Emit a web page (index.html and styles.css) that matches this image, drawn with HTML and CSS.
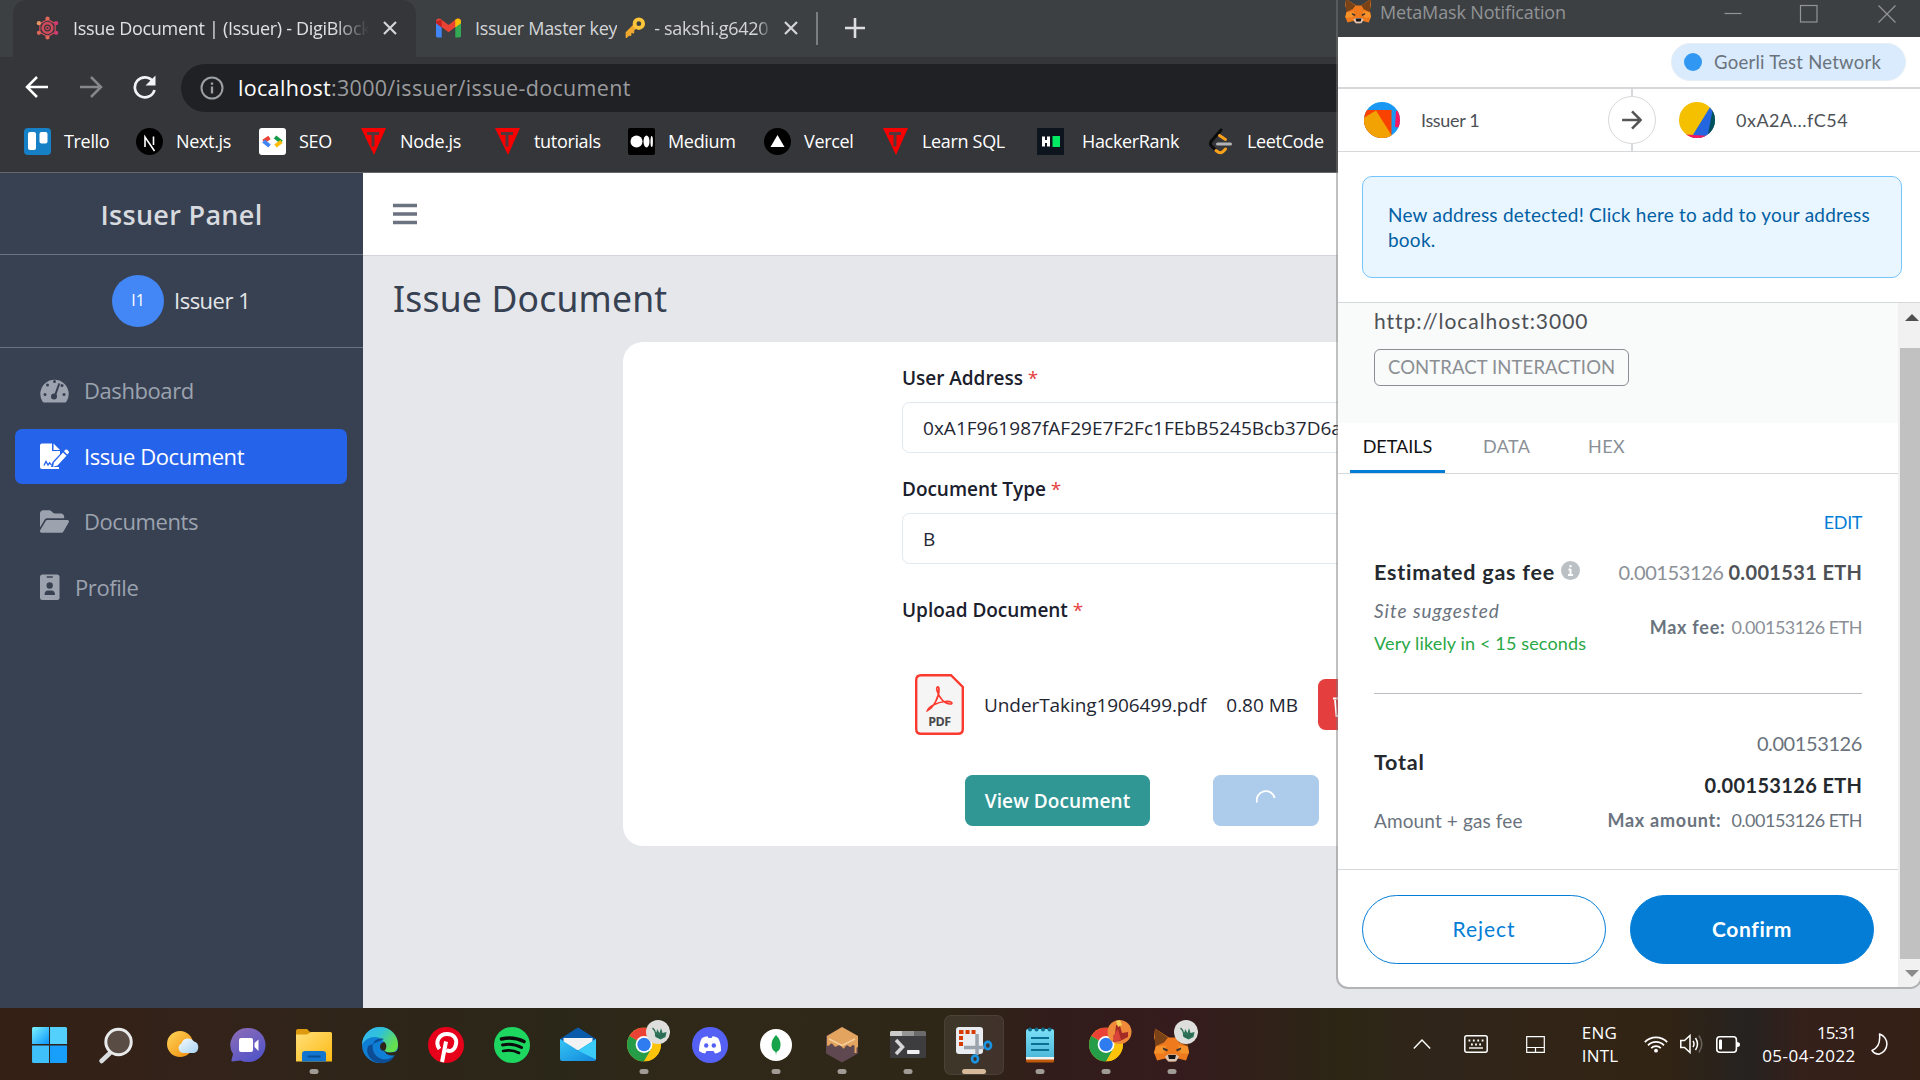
FILE: index.html
```html
<!DOCTYPE html>
<html lang="en">
<head>
<meta charset="utf-8">
<title>Issue Document | (Issuer) - DigiBlock</title>
<link rel="stylesheet" href="styles.css">
</head>
<body>

<svg class="defs" aria-hidden="true">
  <defs>
    <linearGradient id="win" x1="0" y1="0" x2="1" y2="1"><stop offset="0" stop-color="#7df3ff"/><stop offset="1" stop-color="#0a95f9"/></linearGradient>
    <linearGradient id="sun" x1="0" y1="0" x2="1" y2="1"><stop offset="0" stop-color="#ffd65a"/><stop offset="1" stop-color="#f08a0c"/></linearGradient>
    <linearGradient id="cloud" x1="0" y1="0" x2="1" y2="1"><stop offset="0" stop-color="#f4fbff"/><stop offset="1" stop-color="#a9d3f2"/></linearGradient>
    <linearGradient id="chat" x1="0" y1="0" x2="0.6" y2="1"><stop offset="0" stop-color="#8f6db5"/><stop offset="1" stop-color="#5455c8"/></linearGradient>
    <linearGradient id="folder" x1="0" y1="0" x2="1" y2="1"><stop offset="0" stop-color="#ffe07a"/><stop offset="1" stop-color="#fdb913"/></linearGradient>
    <linearGradient id="edge" x1="0" y1="0" x2="1" y2="0.5"><stop offset="0" stop-color="#35b5f5"/><stop offset="0.5" stop-color="#2fc2d8"/><stop offset="1" stop-color="#66e04c"/></linearGradient>
    <linearGradient id="mail" x1="0" y1="0" x2="1" y2="1"><stop offset="0" stop-color="#35c5f4"/><stop offset="1" stop-color="#1387dc"/></linearGradient>
    <linearGradient id="note" x1="0" y1="0" x2="0" y2="1"><stop offset="0" stop-color="#7be0f7"/><stop offset="1" stop-color="#4fb9da"/></linearGradient>
    <symbol id="close" viewBox="0 0 14 14"><path d="M1 1l12 12M13 1L1 13" fill="none" stroke="currentColor" stroke-width="2.2"/></symbol>
    <symbol id="tpoint" viewBox="0 0 27 27"><path d="M1 0h25L14 27z" fill="#f80000"/><path d="M7 5.500h12M13 5.500v13" stroke="#54373a" stroke-width="3" fill="none"/></symbol>
    <symbol id="chrome" viewBox="0 0 34 34">
      <circle cx="17" cy="17" r="17" fill="#fcc30b"/>
      <path d="M17 17L2.300 8.500A17 17 0 0 1 31.700 8.500L31.700 9z" fill="#ea4335"/>
      <path d="M17 17L2.300 8.500A17 17 0 0 0 17 34L24.500 21z" fill="#259c47"/>
      <path d="M17 9h14.900A17 17 0 0 1 17 34l7.500-13z" fill="#fcc30b"/>
      <circle cx="17" cy="17" r="8.400" fill="#fff"/><circle cx="17" cy="17" r="6.700" fill="#2f7cf0"/>
    </symbol>
    <symbol id="fox" viewBox="0 0 36 34">
      <path d="M1 0L15 9H22L34 0L35 9L33 16L35 24L32 32L24 30L20 33H15L11 30L3 32L0 24L2 16L0 9z" fill="#ee7a1d"/>
      <path d="M1 0L14 9L10 14L1 18z" fill="#7a4217"/><path d="M34 0L22 9L25 14L34 18z" fill="#7a4217"/>
      <path d="M2 18L12 17L10 25L0 25zM34 18L24 17L26 25L35 25z" fill="#f6922b"/>
      <path d="M9 19l5 2-1 2-4-2zM27 19l-5 2 1 2 4-2z" fill="#40352c"/>
      <path d="M11 28l3-2h8l3 2-3 5h-8z" fill="#d8c3b5"/><path d="M14 26.500h8l-1 4h-6z" fill="#161616"/>
    </symbol>
    <symbol id="frog" viewBox="0 0 24 24"><circle cx="12" cy="12" r="12" fill="#dedfdd"/><path d="M8 9.500l2.500 3 .5-3.500 2.500 4 1.500-5 1.500 5 4-1-1 5-5 2.500-5-2.500z" fill="#2e7258"/><path d="M9 15l4 2 5-3M6.500 8l2.500 3" stroke="#2a6650" stroke-width="1.200" fill="none"/></symbol>
  </defs>
</svg>

<header class="browser">
  <div class="tabstrip">
    <div class="tab tab-active">
      <svg class="favicon" viewBox="0 0 24 24" fill="none" stroke="#cf4a5c" stroke-width="1.300"><path d="M12 3l8 4.500v9L12 21l-8-4.500v-9z"/><circle cx="12" cy="12" r="5" stroke-width="2.800"/><circle cx="12" cy="12" r="1.800"/><g fill="#e0685a" stroke="none"><circle cx="12" cy="2.200" r="2.200"/><circle cx="12" cy="21.800" r="2.200"/><circle cx="3" cy="7" r="2.200" fill="#e89a62"/><circle cx="3" cy="17" r="2.200"/><circle cx="21" cy="7" r="2.200" fill="#d23b70"/><circle cx="21" cy="17" r="2.200" fill="#d23b70"/></g></svg>
      <span class="tab-title fade">Issue Document | (Issuer) - DigiBlock</span>
      <svg class="tab-close"><use href="#close"/></svg>
    </div>
    <div class="tab">
      <svg class="favicon" viewBox="0 0 24 24"><path d="M0 5v14.500A1.500 1.500 0 0 0 1.500 21H5.500V9z" fill="#4285f4"/><path d="M24 5v14.500a1.500 1.500 0 0 1-1.500 1.500H18.500V9z" fill="#34a853"/><path d="M0 5.500C0 3 2.800 2 4.600 3.400L12 9l7.400-5.600C21.200 2 24 3 24 5.500V7l-12 9L0 7z" fill="#ea4335"/><path d="M18.500 4.100l.9-.7C21.200 2 24 3 24 5.500V7.500L18.500 11.500z" fill="#fbbc04"/><path d="M0 5.500V7.500L5.500 11.500V4.100z" fill="#c5221f"/></svg>
      <span class="tab-title">Issuer Master key</span>
      <svg class="key" viewBox="0 0 22 22"><path d="M12.500 9.500L2 20v-3.500L10.500 8M4 18l2.500 1M7 15l2.500 1.500" fill="none" stroke="#f0a92c" stroke-width="2.600"/><circle cx="14.500" cy="7" r="4.500" fill="none" stroke="#fcc53a" stroke-width="4"/></svg>
      <span class="tab-title sender fade">- sakshi.g6420</span>
      <svg class="tab-close"><use href="#close"/></svg>
    </div>
    <span class="tab-divider"></span>
    <svg class="new-tab" viewBox="0 0 20 20"><path d="M10 0v20M0 10h20" stroke="#dcdee0" stroke-width="2.600"/></svg>
  </div>
  <div class="toolbar">
    <svg class="nav-icon" viewBox="0 0 24 24"><path d="M23 12H2.500M12 2L2 12l10 10" fill="none" stroke="#fff" stroke-width="2.500"/></svg>
    <svg class="nav-icon" viewBox="0 0 24 24"><path d="M1 12h20.500M12 2l10 10-10 10" fill="none" stroke="#85878a" stroke-width="2.500"/></svg>
    <svg class="nav-icon" viewBox="0 0 24 24"><path d="M20 6.500A10 10 0 1 0 21.500 15" fill="none" stroke="#f2f3f4" stroke-width="2.700"/><path d="M22.500 0.500v10h-10z" fill="#f2f3f4"/></svg>
    <div class="omnibox">
      <svg class="info" viewBox="0 0 24 24" fill="none" stroke="#9aa0a6"><circle cx="12" cy="12" r="10.500" stroke-width="2"/><path d="M12 10.500v7M12 6.500v2.300" stroke-width="2.300"/></svg>
      <span class="url"><b>localhost</b>:3000/issuer/issue-document</span>
    </div>
  </div>
  <nav class="bookmarks">
    <a class="bookmark"><svg viewBox="0 0 27 27"><rect width="27" height="27" rx="4" fill="#1680c6"/><rect x="4" y="4" width="8" height="18" rx="2" fill="#fff"/><rect x="15.500" y="4" width="8" height="11.500" rx="2" fill="#fff"/></svg><span>Trello</span></a>
    <a class="bookmark"><svg viewBox="0 0 27 27"><circle cx="13.500" cy="13.500" r="13.500"/><path d="M9 19V9l9.500 14M17.500 8.500v8.500" fill="none" stroke="#fff" stroke-width="1.600"/></svg><span>Next.js</span></a>
    <a class="bookmark"><svg viewBox="0 0 27 27"><rect width="27" height="27" rx="3" fill="#fff"/><path d="M10.500 9.500l-6 4" stroke="#ea4335" stroke-width="4"/><path d="M4.500 13l6 5" stroke="#4285f4" stroke-width="4"/><path d="M16 9l6.500 5" stroke="#159a4b" stroke-width="4"/><path d="M22.500 13.500l-6 4.500" stroke="#fbbc04" stroke-width="4"/></svg><span>SEO</span></a>
    <a class="bookmark"><svg><use href="#tpoint"/></svg><span>Node.js</span></a>
    <a class="bookmark"><svg><use href="#tpoint"/></svg><span>tutorials</span></a>
    <a class="bookmark"><svg viewBox="0 0 27 27"><rect width="27" height="27" rx="2"/><circle cx="8.500" cy="13.500" r="6" fill="#fff"/><ellipse cx="18.500" cy="13.500" rx="3" ry="6" fill="#fff"/><ellipse cx="23.700" cy="13.500" rx="1.200" ry="5.500" fill="#fff"/></svg><span>Medium</span></a>
    <a class="bookmark"><svg viewBox="0 0 27 27"><circle cx="13.500" cy="13.500" r="13.500"/><path d="M13.500 7l7 12h-14z" fill="#fff"/></svg><span>Vercel</span></a>
    <a class="bookmark"><svg><use href="#tpoint"/></svg><span>Learn SQL</span></a>
    <a class="bookmark wide-gap"><svg viewBox="0 0 27 27"><rect width="27" height="27" fill="#0e141e"/><path d="M6.500 8.500v10M11.500 8.500v10M6 13.500h6" stroke="#fff" stroke-width="3"/><rect x="15.500" y="8" width="7.500" height="11" fill="#00ea64"/></svg><span>HackerRank</span></a>
    <a class="bookmark"><svg viewBox="0 0 27 27" fill="none" stroke-linecap="round" stroke-width="3"><path d="M14 2L4.500 13c-1.500 2-1 4 0 5l4 4" stroke="#0b0b0b"/><path d="M12.500 7.500l6 4M9 22.500c4 3.500 6 3 9.500-1.500" stroke="#f9a11b"/><path d="M10.500 16h13" stroke="#b3b3b3"/></svg><span>LeetCode</span></a>
  </nav>
</header>

<main class="app">
  <aside class="sidebar">
    <div class="panel-title">Issuer Panel</div>
    <div class="profile"><span class="avatar">I1</span><span class="profile-name">Issuer 1</span></div>
    <nav class="menu">
      <a class="menu-item"><svg class="mi" viewBox="0 0 29 29"><path d="M2.500 25.500A14.200 14.200 0 1 1 26.500 25.500Q26 26.500 25 26.500H4Q3 26.500 2.500 25.500z" fill="currentColor"/><g fill="#384152"><circle cx="14.500" cy="5.500" r="1.500"/><circle cx="7.500" cy="9" r="1.500"/><circle cx="5" cy="18.500" r="1.500"/><circle cx="24" cy="18.500" r="1.500"/><circle cx="14" cy="20.500" r="3"/><path d="M18.500 7l1.700.7-4.500 13-2-.6z"/><circle cx="22" cy="9.500" r="1.500"/></g></svg><span>Dashboard</span></a>
      <a class="menu-item active"><svg class="mi" viewBox="0 0 29 29"><path d="M2 1.500h10v7.500h8v3l-7.500 8-1.500 5H19V27H2Q0 27 0 25V3.500Q0 1.500 2 1.500z" fill="currentColor"/><path d="M13.500 1.500l6.500 6.500h-6.500z" fill="currentColor"/><path d="M14 20.500L23 10.500l3.500 3.200L17.500 23.500l-4.500 1.200z" fill="currentColor"/><path d="M24 9.300l1.300-1.500q1-.8 2 0l1.300 1.400q.8 1 0 1.900L27.400 12.500z" fill="currentColor"/><path d="M4 23.500l2-4 2 3.500 1.500-2.200 2 2.200" fill="none" stroke="#2563eb" stroke-width="1.300"/></svg><span>Issue Document</span></a>
      <a class="menu-item"><svg class="mi" viewBox="0 0 576 512"><path fill="currentColor" d="M88.700 223.800L0 375.800V96C0 60.700 28.700 32 64 32H181.500c17 0 33.300 6.700 45.300 18.700l26.500 26.500c12 12 28.300 18.700 45.300 18.700H416c35.300 0 64 28.700 64 64v32H144c-22.800 0-43.800 12.100-55.300 31.800zm27.600 16.100C122.100 230 132.600 224 144 224H544c11.500 0 22 6.100 27.700 16.100s5.700 22.200-.1 32.100l-112 192C453.900 474 443.400 480 432 480H32c-11.500 0-22-6.100-27.700-16.100s-5.700-22.200 .1-32.100l112-192z"/></svg><span>Documents</span></a>
      <a class="menu-item"><svg class="mi narrow" viewBox="0 0 20 26"><rect width="19.500" height="25.500" rx="2.500" fill="currentColor"/><g fill="#384152"><rect x="6.500" y="1.800" width="6.500" height="1.500" rx=".7"/><circle cx="9.700" cy="11" r="3.200"/><path d="M4.500 20.500q0-4.500 3.500-4.500h3.500q3.500 0 3.500 4.500z"/></g></svg><span>Profile</span></a>
    </nav>
  </aside>
  <section class="content">
    <div class="topbar"><svg class="burger" viewBox="0 0 24 22"><path d="M0 2.500h24M0 11h24M0 19.500h24" stroke="#6b7280" stroke-width="3.500"/></svg></div>
    <h1 class="page-title">Issue Document</h1>
    <form class="card">
      <label>User Address <i>*</i></label>
      <div class="field">0xA1F961987fAF29E7F2Fc1FEbB5245Bcb37D6a</div>
      <label class="second">Document Type <i>*</i></label>
      <div class="field">B</div>
      <label class="third">Upload Document <i>*</i></label>
      <div class="file">
        <svg class="pdf" viewBox="0 0 49 61"><path d="M6 1.200H36L47.800 13V55q0 4.800-4.800 4.800H6Q1.200 59.800 1.200 55V6Q1.200 1.200 6 1.200z" fill="#f5f5f5" stroke="#fb3a2f" stroke-width="2.400"/><path d="M12.500 36.500c6-3 11.500-13 11.500-21 0-4-3-3-2 1 2 8 8 13.500 13 13.500 4 0 1.500-3.500-5-2.500-8 .8-16 5-17.500 9z" fill="none" stroke="#fb3a2f" stroke-width="1.700"/><text class="pdf-text" x="24.500" y="52">PDF</text></svg>
        <span class="filename">UnderTaking1906499.pdf</span><span class="size">0.80 MB</span>
        <span class="delete"><svg viewBox="0 0 20 22"><path d="M0 3.500h20M2 5l1.500 16h13L18 5M7 3V1h6v2M8 8v10M12 8v10" fill="none" stroke="#fff" stroke-width="1.800"/></svg></span>
      </div>
      <div class="actions">
        <span class="btn view">View Document</span>
        <span class="btn busy"><svg viewBox="0 0 20 20"><path d="M1 12.500A9 9 0 0 1 18.800 8" fill="none" stroke="#fff" stroke-width="1.800"/></svg></span>
      </div>
    </form>
  </section>
</main>

<footer class="taskbar">
  <div class="apps">
    <svg viewBox="0 0 66 72"><g fill="url(#win)"><path d="M15 20.500q0-1.500 1.500-1.500h15.500v17h-17z"/><path d="M33 19h15.500q1.500 0 1.500 1.500V36h-17z" fill="#53d0fb"/><path d="M15 37.500h17V55H16.500q-1.500 0-1.500-1.500z" fill="#3fc0fb"/><path d="M33 37.500h17v16q0 1.500-1.500 1.500H33z" fill="#189ffb"/></g></svg>
    <svg viewBox="0 0 66 72"><path d="M27 45l-8.500 8" stroke="#d9dcde" stroke-width="4.500" stroke-linecap="round"/><circle cx="35.500" cy="34" r="12.700" fill="#594c45" stroke="#e9eaec" stroke-width="3"/></svg>
    <svg viewBox="0 0 66 72"><circle cx="31" cy="36" r="13" fill="url(#sun)"/><path d="M34 45a5 5 0 0 1-1.500-9.500a7 7 0 0 1 12.500-2a6 6 0 0 1 0 11.500z" fill="url(#cloud)"/></svg>
    <svg viewBox="0 0 66 72"><path d="M33.500 20a17 17 0 0 1 0 34q-5 0-8-1.500L17 53.500q-1 0-.5-1.500l1.500-6A17 17 0 0 1 33.500 20z" fill="url(#chat)"/><rect x="24" y="30" width="14" height="14" rx="2" fill="#fff"/><path d="M39.500 35l4-3.500v11.500l-4-4z" fill="#fff"/></svg>
    <svg viewBox="0 0 66 72"><path d="M15 23q0-2 2-2h9l4 4v4H15z" fill="#dd9a0e"/><path d="M15 26.500h11l4-2.500h19.500q1.500 0 1.500 1.500V53.500H15z" fill="url(#folder)"/><path d="M21 53.500V46q0-3 3-3h18q3 0 3 3v7.500z" fill="#1175cf"/><path d="M26.500 48.500h13" stroke="#0a4f94" stroke-width="2"/><rect class="dot" x="28.500" y="61" width="9" height="5" rx="2.500"/></svg>
    <svg viewBox="0 0 66 72"><circle cx="33" cy="37" r="18" fill="#0f7fd6"/><path d="M15 37a18 18 0 0 1 36 0q0 8-9 7.500l-5-1.500q3-4 0-9c-5-8-18-6-22 3z" fill="url(#edge)"/><path d="M37 31c-8-2-13 4-11 11 2 8 12 13 21 6-1 4-7 8-14 7-10-1-15-10-12-17z" fill="#0d4d96"/><path d="M51 42q-3 3-9 2.500-4-.5-5-2.500 1 6 11 5.500z" fill="#2e2518"/><path d="M37.500 34q3.500 4 .5 8.500-5 1-5-4 0-4 4.500-4.500z" fill="#2e2518"/></svg>
    <svg viewBox="0 0 66 72"><circle cx="33" cy="37" r="18" fill="#e60019"/><path d="M26.500 41c-5-7-.5-15 7.500-15 7 0 10 5 9 10-1 6-6 8.500-9.500 6M33 33.500L29 54" fill="none" stroke="#fff" stroke-width="4"/></svg>
    <svg viewBox="0 0 66 72"><circle cx="33" cy="37" r="18" fill="#1ed760"/><g fill="none" stroke="#0c0c0c" stroke-linecap="round"><path d="M22.500 31q11.500-3 22.500 2.500" stroke-width="3.600"/><path d="M23.500 37q10-2.500 19 2.500" stroke-width="3"/><path d="M24 43q9-2 16 2" stroke-width="2.600"/></g></svg>
    <svg viewBox="0 0 66 72"><path d="M15 31l17-11q1-.7 2 0l17 11v4H15z" fill="#0a5cab"/><path d="M18.500 30H47.500V42h-29z" fill="#f3f3f3"/><path d="M15 31l18 11.500L51 31v20q0 2-2 2H17q-2 0-2-2z" fill="url(#mail)"/><path d="M33 42.500L51 31v20.500z" fill="#3acbf7"/></svg>
    <svg viewBox="0 0 66 72"><use href="#chrome" x="16" y="19.500" width="34" height="34"/><use href="#frog" x="35" y="12" width="24" height="24"/><rect class="dot" x="28.500" y="61" width="9" height="5" rx="2.500"/></svg>
    <svg viewBox="0 0 66 72"><circle cx="33" cy="37" r="18" fill="#5561f5"/><path d="M22 43c0-6 1-10 3-13q3-1.500 5.500-1.800l1 1.800h3l1-1.800Q38 28.500 41 30c2 3 3 7 3 13q-3 2-6 2.500l-1.500-2.500h-7L28 45.500Q25 45 22 43z" fill="#fff"/><circle cx="29.200" cy="37.500" r="2.200" fill="#5561f5"/><circle cx="36.800" cy="37.500" r="2.200" fill="#5561f5"/></svg>
    <svg viewBox="0 0 66 72"><circle cx="33" cy="37" r="16" fill="#fff"/><path d="M33 27q5 5 4.500 10.500Q37 42.500 33.500 44l-.5 3-.5-3q-4-2-4-7Q28.500 31.500 33 27z" fill="#16a34a"/><rect class="dot" x="28.500" y="61" width="9" height="5" rx="2.500"/></svg>
    <svg viewBox="0 0 66 72"><path d="M33 19l16 9v17.500L33 54.500l-16-9V28z" fill="#5f4850"/><path d="M33 19l16 9v11q-1 0-1.500 1v5h-2v-7q-1.500-2-3 0-1 2-3 0-2-2-3.500 1-1.500 3-3 0-2-3-5-1-2 2-4-1.500-2-2-3 0-1.500 2-3 1V28z" fill="#e2a45f"/><path d="M20 31l13 6.500L46 31" fill="none" stroke="#f6cf9c" stroke-width="1.500"/><rect class="dot" x="28.500" y="61" width="9" height="5" rx="2.500"/></svg>
    <svg viewBox="0 0 66 72"><rect x="15" y="23" width="36" height="27" rx="1.500" fill="#3d3d3f"/><path d="M15 28v-3.500q0-1.500 1.500-1.500H27v5z" fill="#ccc"/><path d="M27 23h12v5H27z" fill="#959595"/><path d="M39 23h10.500q1.500 0 1.500 1.500V28H39z" fill="#6b6b6b"/><path d="M21 32l6.500 7-6.500 7" fill="none" stroke="#d6d6d6" stroke-width="3.500"/><rect x="32" y="42" width="12.500" height="4" rx=".8" fill="#f0f0f0"/><rect class="dot" x="28.500" y="61" width="9" height="5" rx="2.500"/></svg>
    <svg viewBox="0 0 66 72"><rect x="3.500" y="7.500" width="59" height="59" rx="6" fill="#fff" fill-opacity=".08" stroke="#fff" stroke-opacity=".1"/><rect x="15" y="19" width="27" height="27" rx="3" fill="#e9edf2"/><g fill="#d83b01"><path d="M18 22h4.500v4H18zM24.500 22h4v4h-4zM30.500 22h4v4h-4zM18 28h4v4h-4zM18 34h4v4h-4z"/></g><path d="M23 39.500h20M36 26v21" stroke="#9aa2ab" stroke-width="3.500"/><g fill="none" stroke="#1b93e0" stroke-width="2.600"><ellipse cx="46.800" cy="37.500" rx="3.200" ry="3.600"/><ellipse cx="34" cy="51" rx="3" ry="3.400"/></g><rect x="21" y="61" width="24" height="5" rx="2.500" fill="#d5b99a"/></svg>
    <svg viewBox="0 0 66 72"><path d="M19 51h28v2q0 1.500-1.500 1.500h-25Q19 54.500 19 53z" fill="#c0580a"/><rect x="19" y="47" width="28" height="4.500" fill="#f3f3f3"/><path d="M19 23q0-2 2-2h24q2 0 2 2v26H19z" fill="url(#note)"/><path d="M24 30h18M24 36h18M24 42h18" stroke="#0a6f94" stroke-width="2"/><g fill="#0f6e8e"><circle cx="23" cy="21.500" r="2"/><circle cx="29.500" cy="21.500" r="2"/><circle cx="36" cy="21.500" r="2"/><circle cx="42.500" cy="21.500" r="2"/></g><rect class="dot" x="28.500" y="61" width="9" height="5" rx="2.500"/></svg>
    <svg viewBox="0 0 66 72"><use href="#chrome" x="16" y="19.500" width="34" height="34"/><circle cx="46.500" cy="24" r="12" fill="#ee8a3a"/><path d="M43 17l4 1 2 7 6-1v5l-8 4-7 1 2-8z" fill="#a32a25"/><path d="M43 13l4-1 2 5-4 2z" fill="#f2cf55"/><path d="M40 28l5-7 3 11-7 2z" fill="#d8433a"/><rect class="dot" x="28.500" y="61" width="9" height="5" rx="2.500"/></svg>
    <svg viewBox="0 0 66 72"><use href="#fox" x="15" y="20.500" width="36" height="34"/><use href="#frog" x="35" y="12" width="24" height="24"/><rect class="dot" x="28.500" y="61" width="9" height="5" rx="2.500"/></svg>
  </div>
  <div class="tray">
    <svg class="t-chev" viewBox="0 0 18 10"><path d="M.8 9.500L9 1l8.200 8.500" fill="none" stroke="#fff" stroke-width="1.400"/></svg>
    <svg class="t-kbd" viewBox="0 0 24 18"><rect x=".8" y=".8" width="22.400" height="16.400" rx="2" fill="none" stroke="#fff" stroke-width="1.500"/><path d="M4.500 5.500h15" stroke="#fff" stroke-width="1.800" stroke-dasharray="1.800 2.600"/><path d="M7 9.500h11" stroke="#fff" stroke-width="1.800" stroke-dasharray="1.800 2.300"/><path d="M5 13h14" stroke="#fff" stroke-width="1.400"/></svg>
    <svg class="t-pad" viewBox="0 0 19 17"><path d="M.7.700h17.600v15.600H.7zM.7 11.500h17.600M9.500 11.500v5" fill="none" stroke="#fff" stroke-width="1.200"/></svg>
    <div class="lang"><span>ENG</span><span>INTL</span></div>
    <svg class="t-wifi" viewBox="0 0 24 18"><g fill="none" stroke="#fff" stroke-width="1.700"><path d="M.8 7.200a15.500 15.500 0 0 1 22.400 0M4 10.300a11.200 11.200 0 0 1 16 0M7.200 13.200a6.800 6.800 0 0 1 9.600 0"/></g><circle cx="12" cy="15.700" r="1.900" fill="#fff"/></svg>
    <svg class="t-vol" viewBox="0 0 24 20"><g fill="none" stroke="#fff" stroke-width="1.500"><path d="M.8 6.500H4.500L10 1.500v17L4.500 13.500H.8zM13 7q2 3 0 6M15.500 4q4 6 0 12"/><path d="M18.800 1.500q6 8.500 0 17" opacity=".3"/></g></svg>
    <svg class="t-bat" viewBox="0 0 24 17"><rect x=".8" y=".8" width="19.600" height="15.400" rx="3" fill="none" stroke="#fff" stroke-width="1.600"/><rect x="3" y="3.500" width="3" height="10" rx="1" fill="#fff"/><path d="M21 6q3 0 3 2.500T21 11z" fill="#fff"/></svg>
    <div class="clock"><span class="time">15:31</span><span>05-04-2022</span></div>
    <svg class="t-moon" viewBox="0 0 20 22"><path d="M8.500 1A10.500 10.500 0 0 1 8 21.200Q3.500 21 1 17.500 10 14 8.500 1z" fill="none" stroke="#fff" stroke-width="1.500" stroke-linejoin="round"/></svg>
  </div>
</footer>

<section class="wallet">
  <div class="w-title">
    <svg class="w-fox"><use href="#fox"/></svg>
    <span>MetaMask Notification</span>
    <svg class="w-ctl" viewBox="0 0 176 20" fill="none" stroke="#929496" stroke-width="1.200"><path d="M.5 9.500h17"/><rect x="76.500" y="1.500" width="16.500" height="16.500"/><path d="M154.500 1.500l17 17M171.500 1.500l-17 17"/></svg>
  </div>
  <div class="w-net"><div class="pill"><span class="pill-dot"></span><span>Goerli Test Network</span></div></div>
  <div class="w-parties">
    <div class="party from">
      <svg class="ident" viewBox="0 0 36 36"><clipPath id="c"><circle cx="18" cy="18" r="18"/></clipPath><g clip-path="url(#c)"><path d="M0 0h36v36H0z" fill="#1898f3"/><path d="M0 8h27.500v28H0z" fill="#fa4200"/><path d="M-2 17L12 8.500 28 34v6H0z" fill="#f2a202"/><path d="M32 9l5-1v18l-6-1z" fill="#fb1860"/></g></svg>
      <span>Issuer 1</span>
    </div>
    <div class="arrow"><svg viewBox="0 0 22 22"><path d="M0 11h20M11 1.500L20.500 11 11 20.500" fill="none" stroke="#555" stroke-width="2.800"/></svg></div>
    <div class="party to">
      <svg class="ident" viewBox="0 0 36 36"><g clip-path="url(#c)"><path d="M0 0h36v36H0z" fill="#f5c000"/><path d="M33 2L12 36h24V2z" fill="#2465e0"/><path d="M34 6l-5 26h9V6z" fill="#01515d"/><path d="M6 32.500l26 1.500v3H6z" fill="#fb1860"/></g></svg>
      <span>0xA2A...fC54</span>
    </div>
  </div>
  <div class="w-alert"><p>New address detected! Click here to add to your address<br>book.</p></div>
  <div class="w-body">
    <div class="w-main">
      <div class="w-origin"><div class="origin">http://localhost:3000</div><div class="badge">CONTRACT INTERACTION</div></div>
      <div class="tabs"><span class="on">DETAILS</span><span class="data">DATA</span><span class="hex">HEX</span></div>
      <div class="details">
        <div class="edit">EDIT</div>
        <div class="row gas">
          <div class="gas-name"><b class="big">Estimated gas fee</b><svg class="i" viewBox="0 0 19 19"><circle cx="9.500" cy="9.500" r="9.500" fill="#bbc0c5"/><path d="M9.500 8v6.500M7.500 8.500h2M7 14h5M9.500 4v2.300" stroke="#fff" stroke-width="2"/></svg></div>
          <div><span class="num gray">0.00153126</span> <b class="sum dark">0.001531 ETH</b></div>
        </div>
        <div class="row estimate">
          <div><p class="site">Site suggested</p><p class="likely">Very likely in &lt; 15 seconds</p></div>
          <div class="max"><b>Max fee:</b><span class="small gray">0.00153126 ETH</span></div>
        </div>
        <hr>
        <div class="row total"><b class="big">Total</b><div class="total-values"><span class="num slate">0.00153126</span><b class="sum">0.00153126 ETH</b></div></div>
        <div class="row amount"><span>Amount + gas fee</span><div class="max"><b>Max amount:</b><span class="small wide">0.00153126 ETH</span></div></div>
      </div>
      <div class="w-actions"><span class="round reject">Reject</span><span class="round confirm">Confirm</span></div>
    </div>
    <div class="scroll"><span class="up"></span><span class="thumb"></span><span class="down"></span></div>
  </div>
</section>
</body>
</html>
```
FILE: styles.css
```css
* { box-sizing: border-box; }
body { margin: 0; width: 1920px; height: 1080px; overflow: hidden; position: relative; display: flex; flex-direction: column; font-family: "Open Sans", "Noto Sans", sans-serif; white-space: nowrap; }
svg { display: block; flex: none; }
p, h1, hr { margin: 0; }
.defs { position: absolute; width: 0; height: 0; }

/* Browser frame */
.browser { height: 173px; background: #35363a; border-bottom: 1px solid #66676a; color: #fff; }
.tabstrip { height: 57px; background: #3c4043; display: flex; padding-left: 13px; }
.tab { width: 403px; display: flex; align-items: center; padding: 0 20px 2px 20px; font-size: 18px; letter-spacing: -.3px; color: #d3d5d8; }
.tab-active { background: #35363a; border-radius: 14px 14px 0 0; padding-left: 23px; }
.favicon { width: 25px; height: 26px; margin-right: 14px; }
.tab-active .favicon { width: 23px; }
.tab-title { overflow: hidden; }
.tab-active .tab-title { width: 296px; color: #dfe1e4; }
.fade { -webkit-mask-image: linear-gradient(90deg, #000 88%, transparent); mask-image: linear-gradient(90deg, #000 88%, transparent); }
.key { width: 21px; height: 21px; margin: 0 8px; }
.sender { letter-spacing: -.3px; width: 118px; }
.tab-close { width: 14px; height: 14px; margin-left: auto; margin-right: -1px; }
.tab:nth-child(2) .tab-close { margin-right: 1px; }
.tab-divider { width: 2px; height: 33px; margin-top: 12px; background: #7b7e81; margin-left: -3px; }
.new-tab { width: 20px; height: 20px; margin: 18px 0 0 27px; }
.toolbar { height: 62px; padding-top: 7px; padding-left: 25px; display: flex; }
.nav-icon { width: 24px; height: 24px; margin: 11px 30px 0 0; }
.omnibox { flex: 1; height: 48px; margin-left: -6px; border-radius: 24px 0 0 24px; background: #202124; display: flex; align-items: center; padding-left: 19px; }
.info { width: 24px; height: 24px; margin-right: 14px; }
.url { font-size: 21.500px; letter-spacing: .32px; color: #9a9b9e; padding-bottom: 2px; }
.url b { font-weight: 400; color: #fff; }
.bookmarks { height: 45px; padding-left: 24px; display: grid; grid-template-columns: 112px 123px 101px 134px 134px 136px 118px 155px 170px 140px; font-size: 18px; letter-spacing: -.33px; }
.bookmark { display: flex; align-items: center; gap: 13px; }
.bookmark span { padding-bottom: 1px; }
.bookmark.wide-gap { gap: 18px; }
.bookmark svg { width: 27px; height: 27px; }

/* Issuer application */
.app { flex: 1; display: flex; }
.sidebar { width: 363px; background: #384152; color: #e4e6e9; }
.panel-title { height: 82px; line-height: 83px; text-align: center; font-size: 27px; font-weight: 600; letter-spacing: .3px; color: #d7dade; border-bottom: 1px solid #6b7280; }
.profile { height: 93px; display: flex; align-items: center; padding-left: 112px; gap: 10px; border-bottom: 1px solid #6b7280; }
.avatar { width: 52px; height: 52px; line-height: 51px; text-align: center; border-radius: 50%; background: #4287f5; color: #fff; font-size: 16px; }
.profile-name { font-size: 22px; letter-spacing: -.5px; padding-bottom: 2px; }
.menu { padding: 15px 16px 0 15px; display: flex; flex-direction: column; gap: 10.600px; }
.menu-item { height: 55px; border-radius: 7px; padding-left: 25px; display: flex; align-items: center; gap: 15px; color: #9ca3af; font-size: 22px; letter-spacing: -.42px; }
.menu-item span { padding-bottom: 1px; }
.menu-item.active { background: #2563eb; color: #fff; }
.mi { width: 29px; height: 29px; }
.mi.narrow { width: 20px; }
.content { flex: 1; background: #e5e7eb; }
.topbar { height: 83px; padding: 30px; background: #fff; border-bottom: 1px solid #d1d5db; }
.burger { width: 24px; height: 22px; }
.page-title { height: 86px; padding-left: 30px; font: 400 35.500px/84px "Noto Sans", sans-serif; letter-spacing: .2px; color: #374151; }
.card { width: 1037px; height: 504px; margin-left: 260px; padding: 21px 279px 0; background: #fff; border-radius: 20px; font-size: 19px; color: #1f2733; }
label { display: block; height: 30px; line-height: 30px; margin-bottom: 9px; font-weight: 600; color: #1a202c; letter-spacing: -.03px; }
label i { color: #e53e3e; font-style: normal; font-weight: 400; }
label.second { margin-top: 21px; }
label.third { margin-top: 31px; margin-bottom: 49px; }
.field { height: 51px; border: 1px solid #e2e8f0; border-radius: 7.500px; padding: 1px 20px; line-height: 49px; overflow: hidden; letter-spacing: .02px; }
.file { height: 61px; display: flex; align-items: center; padding-left: 13px; }
.pdf { width: 49px; height: 61px; margin-right: 20px; }
.pdf-text { font: 700 12.500px "Open Sans", sans-serif; text-anchor: middle; fill: #48494b; letter-spacing: -.5px; }
.filename { letter-spacing: -.08px; }
.size { margin-left: 20px; margin-right: 20px; }
.delete { width: 60px; height: 51px; border-radius: 7.500px; background: #e53e3e; padding: 16px 15px; }
.delete svg { width: 20px; height: 22px; }
.actions { display: flex; gap: 63px; margin-top: 40px; padding-left: 63px; }
.btn { height: 51px; border-radius: 7.500px; font-weight: 600; color: #fff; text-align: center; line-height: 52px; }
.view { width: 185px; background: #319795; letter-spacing: .1px; }
.busy { width: 106px; background: #adcbea; padding: 15px 43px; }
.busy svg { width: 20px; height: 20px; }

/* Taskbar */
.taskbar { height: 72px; display: flex; background: linear-gradient(90deg, #342015 0, #33231a 220px, #2d2618 420px, #2b2718 560px, #302919 700px, #2e2617 950px, #321c1b 1050px, #351b1d 1180px, #2c2615 1340px, #30251a 1440px, #322414 1660px, #252220 1750px, #35201a 1800px, #342015 100%); }
.apps { display: flex; padding-left: 16.500px; }
.apps svg { width: 66.050px; height: 72px; }
.dot { fill: #a09b94; }
.tray { flex: 1; display: flex; align-items: center; padding-left: 207.500px; color: #fff; font-size: 17px; }
.t-chev { width: 18px; height: 10px; margin-right: 33px; }
.t-kbd { width: 24px; height: 18px; margin-right: 38px; }
.t-pad { width: 19px; height: 17px; margin-right: 37px; }
.lang { width: 62px; }
.lang span, .clock span { display: block; height: 23px; line-height: 23px; letter-spacing: .2px; }
.t-wifi { width: 24px; height: 18px; margin-right: 12px; }
.t-vol { width: 24px; height: 20px; margin-right: 12px; }
.t-bat { width: 24px; height: 17px; margin-right: 21px; }
.clock { width: 95px; text-align: right; margin-right: 15px; }
.clock span { letter-spacing: .5px; }
.clock .time { letter-spacing: -.9px; }
.t-moon { width: 20px; height: 22px; }

/* Wallet window floating over the page */
.wallet { position: absolute; left: 1336px; top: 0; width: 586px; height: 989px; border: solid rgba(121, 121, 121, .47); border-width: 0 2px 2px; border-radius: 0 0 12px 12px; background: #fff; background-clip: padding-box; overflow: hidden; font-family: Lato, "Open Sans", sans-serif; font-size: 19px; color: #535a61; }
.w-title { height: 37px; background: #3c4043; display: flex; padding-left: 7px; color: #929496; font: 18px/24px "Open Sans", sans-serif; letter-spacing: -.15px; }
.w-fox { width: 27px; height: 25px; margin-right: 8px; margin-top: -1px; }
.w-ctl { width: 176px; height: 20px; margin: 4px 20px 0 auto; }
.w-net { height: 52px; border-bottom: 2px solid #d6d7da; padding: 6px 14px 0 333px; }
.pill { height: 38px; border: 1px solid #e6eef7; border-radius: 19px; background: #d9ebfc; display: flex; align-items: center; padding: 0 0 1px 12px; gap: 12px; font-size: 18.500px; letter-spacing: .25px; color: #6a737d; }
.pill-dot { width: 18px; height: 18px; border-radius: 50%; background: #3098f3; }
.w-parties { height: 63px; border-bottom: 1px solid #d6d9dc; display: flex; align-items: center; font-size: 18px; color: #4d5156; }
.party { display: flex; align-items: center; }
.party span { padding-bottom: 1px; }
.ident { width: 36px; height: 36px; margin-right: 21px; }
.from { width: 270px; padding-left: 26px; letter-spacing: -.35px; }
.to { padding-left: 23px; letter-spacing: .5px; }
.arrow { width: 48px; height: 62px; display: flex; align-items: center; background: linear-gradient(#d6d9dc, #d6d9dc) center / 2px 62px no-repeat; }
.arrow svg { width: 48px; height: 48px; padding: 13px; border: 1px solid #d6d9dc; border-radius: 50%; background: #fff; }
.w-alert { height: 150px; padding: 24px 18px 24px 24px; }
.w-alert p { height: 102px; border: 1px solid #75c4fd; border-radius: 10px; background: #eaf6ff; padding: 25px; line-height: 25px; letter-spacing: .23px; color: #0260a4; }
.w-body { height: 685px; border-top: 1px solid #d6d9dc; display: flex; }
.w-main { width: 560px; }
.w-origin { height: 120px; background: #f9fafa; padding: 4px 36px; }
.origin { height: 30px; line-height: 28px; font-size: 21px; letter-spacing: .95px; color: #4d5156; }
.badge { display: inline-block; margin-top: 12px; width: 255px; height: 37px; line-height: 35px; border: 1px solid #8b8f94; border-radius: 6px; padding-left: 13px; font-size: 18.500px; letter-spacing: .1px; color: #8b8f94; }
.tabs { height: 51px; border-bottom: 1px solid #d6d9dc; display: flex; padding-left: 12px; font-size: 18px; line-height: 46px; color: #8b9097; }
.on { width: 95px; height: 50px; text-align: center; color: #111; border-bottom: 3px solid #037dd6; }
.data { margin-left: 38px; width: 105px; letter-spacing: .4px; }
.hex { letter-spacing: .4px; }
.details { padding: 0 36px; }
.row { display: flex; justify-content: space-between; align-items: center; }
.edit { height: 26px; line-height: 26px; margin-top: 35px; text-align: right; font-size: 18px; letter-spacing: -.4px; color: #037dd6; }
.gas { height: 30px; margin-top: 22px; }
.gas-name { display: flex; align-items: center; gap: 6px; }
.i { width: 19px; height: 19px; margin-top: -3px; }
.big { font-size: 21.500px; letter-spacing: .76px; color: #24292e; }
.num { font-size: 20px; letter-spacing: -.4px; }
.sum { font-size: 20px; letter-spacing: .35px; margin-right: -.35px; color: #24292e; }
.dark { color: #4d5156; }
.gray { color: #8b9097; }
.slate { color: #6a737d; }
.estimate { height: 62px; margin-top: 9px; }
.estimate p { height: 31px; line-height: 30px; }
.site { font-style: italic; letter-spacing: .98px; color: #6a737d; }
.likely { font-size: 18px; letter-spacing: .15px; padding-top: 1px; color: #28a745; }
.max { display: flex; font-size: 18px; color: #6a737d; }
.max b { letter-spacing: .75px; }
.small { margin-left: 6px; letter-spacing: -.5px; }
.small.wide { margin-left: 10px; }
hr { height: 1px; border: 0; background: #b9bcc0; margin: 35px 0 0; }
.total { height: 84px; margin-top: 26px; }
.total-values { text-align: right; }
.total-values > * { display: block; height: 38px; line-height: 39px; }
.total-values .num { height: 46px; line-height: 47px; }
.amount { height: 32px; color: #6a737d; letter-spacing: .12px; }
.w-actions { margin-top: 33px; border-top: 1px solid #d6d9dc; padding: 25px 24px 0; display: flex; gap: 24px; }
.round { width: 244px; height: 69px; line-height: 66px; border: 1px solid #037dd6; border-radius: 35px; text-align: center; font-size: 21px; letter-spacing: .95px; }
.reject { color: #037dd6; }
.confirm { background: #037dd6; color: #fff; font-weight: 700; letter-spacing: .6px; }
.scroll { width: 22px; background: #f1f1f1; display: flex; flex-direction: column; align-items: center; padding-left: 2px; }
.up, .down { border: solid transparent; border-width: 0 7px; }
.up { border-bottom: 7px solid #505050; margin: 11px 0 27px; margin-left: 4px; }
.down { border-top: 7px solid #8b8b8b; margin: 11px 0 0 4px; }
.thumb { width: 100%; height: 611px; background: #c1c1c1; }
```
